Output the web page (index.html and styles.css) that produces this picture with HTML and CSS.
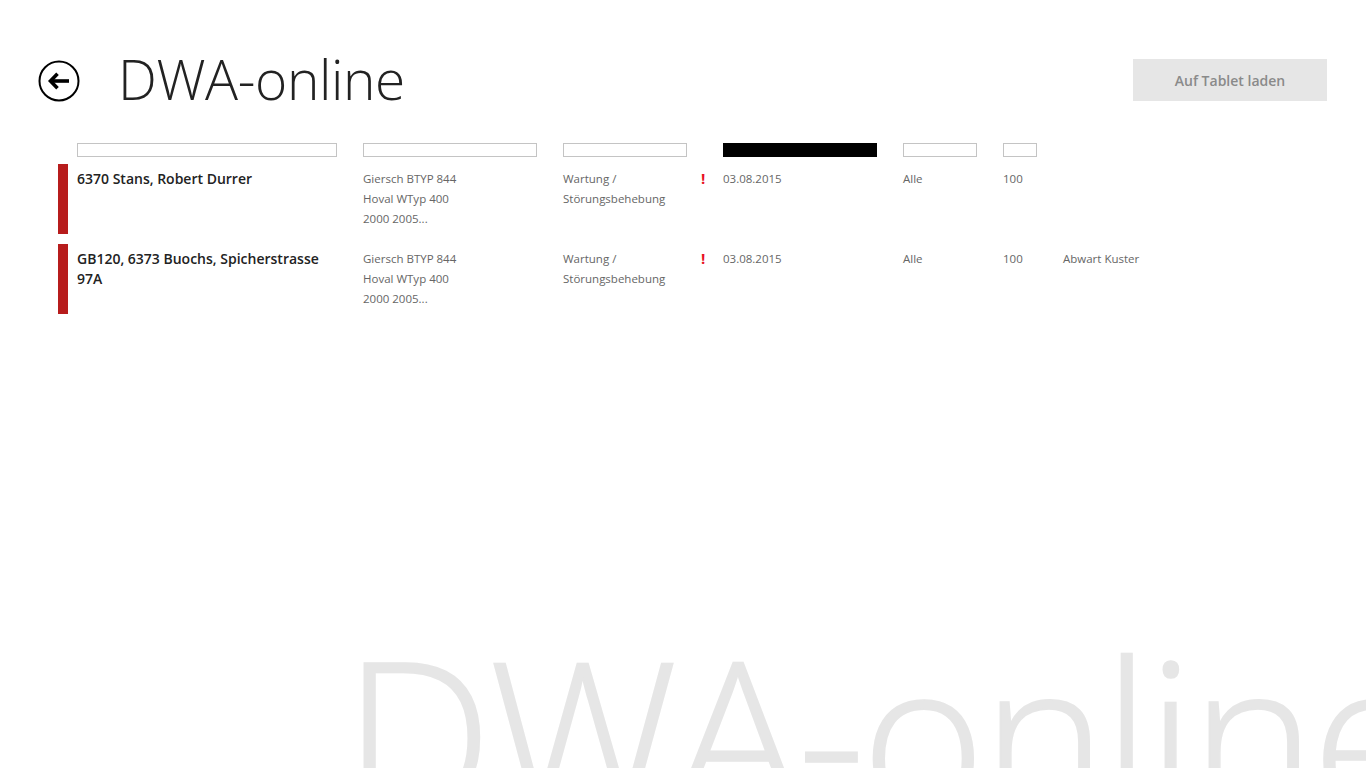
FILE: index.html
```html
<html>
<head>
  <meta charset="utf-8">
  <link rel="stylesheet" href="styles.css">
</head>
<body>
  <div class="page">
    <div class="watermark">DWA-online</div>

    <div class="page-header">
      <div class="page-header_left">
        <button class="back-button" type="button">
          <svg width="42" height="42" viewBox="0 0 42 42">
            <circle cx="21" cy="21" r="19.5" fill="none" stroke="#000" stroke-width="2"/>
            <path d="M12.5 21 H31" fill="none" stroke="#000" stroke-width="3.6"/>
            <path d="M19.5 13.8 L12.5 21 L19.5 28.2" fill="none" stroke="#000" stroke-width="3.6" stroke-linejoin="miter"/>
          </svg>
        </button>
        <h1 class="page-header_title">DWA-online</h1>
      </div>
      <button class="load-button" type="button">Auf Tablet laden</button>
    </div>

    <div class="list">
      <div class="list_filters">
        <span class="filter filter-name"></span>
        <span class="filter filter-device"></span>
        <span class="filter filter-type"></span>
        <span></span>
        <span class="filter filter-date is-active"></span>
        <span class="filter filter-group"></span>
        <span class="filter filter-count"></span>
        <span></span>
      </div>

      <div class="list_row">
        <div class="list_row_marker"></div>
        <div class="list_row_cells">
          <div class="cell-name">6370 Stans, Robert Durrer</div>
          <div class="cell-small">Giersch BTYP 844<br>Hoval WTyp 400<br>2000 2005...</div>
          <div class="cell-small">Wartung /<br>Störungsbehebung</div>
          <div class="cell-flag">!</div>
          <div class="cell-small">03.08.2015</div>
          <div class="cell-small">Alle</div>
          <div class="cell-small">100</div>
          <div class="cell-small"></div>
        </div>
      </div>

      <div class="list_row">
        <div class="list_row_marker"></div>
        <div class="list_row_cells">
          <div class="cell-name">GB120, 6373 Buochs, Spicherstrasse 97A</div>
          <div class="cell-small">Giersch BTYP 844<br>Hoval WTyp 400<br>2000 2005...</div>
          <div class="cell-small">Wartung /<br>Störungsbehebung</div>
          <div class="cell-flag">!</div>
          <div class="cell-small">03.08.2015</div>
          <div class="cell-small">Alle</div>
          <div class="cell-small">100</div>
          <div class="cell-small">Abwart Kuster</div>
        </div>
      </div>
    </div>
  </div>
</body>
</html>
```

FILE: styles.css
```css
html, body {
  margin: 0;
  padding: 0;
  height: 100%;
  overflow: hidden;
  background: #fff;
}
body {
  font-family: "Segoe UI", "Open Sans", "Noto Sans", sans-serif;
  color: #222;
}
.page {
  position: relative;
  height: 100%;
  overflow: hidden;
  isolation: isolate;
}
.page-header {
  display: flex;
  justify-content: space-between;
  align-items: flex-start;
  padding: 59px 39px 0 38px;
}
.page-header_left {
  display: flex;
  align-items: center;
}
.back-button {
  width: 42px;
  height: 42px;
  padding: 0;
  border: none;
  background: none;
  margin-top: 1px;
}
.back-button svg {
  display: block;
}
.page-header_title {
  margin: -4px 0 0 38px;
  font-size: 55px;
  font-weight: 300;
  line-height: 42px;
  letter-spacing: -0.4px;
  color: #222;
}
.load-button {
  width: 194px;
  height: 42px;
  border: none;
  background: #e6e6e6;
  color: #8a8a8a;
  font-family: "Segoe UI", "Open Sans", sans-serif;
  font-size: 14px;
  font-weight: 600;
}
.list {
  padding: 41px 0 0 58px;
}
.list_filters,
.list_row_cells {
  display: grid;
  grid-template-columns: 286px 200px 136px 24px 180px 100px 60px auto;
}
.list_filters {
  padding-left: 19px;
  height: 14px;
  margin-bottom: 7px;
}
.filter {
  display: block;
  box-sizing: border-box;
  height: 14px;
  border: 1px solid #c4c4c4;
  background: #fff;
}
.filter-name { width: 260px; }
.filter-device { width: 174px; }
.filter-type { width: 124px; }
.filter-date { width: 154px; }
.filter-group { width: 74px; }
.filter-count { width: 34px; }
.filter.is-active {
  background: #000;
  border-color: #000;
}
.list_row {
  display: flex;
  height: 70px;
  margin-bottom: 10px;
}
.list_row_marker {
  width: 10px;
  background: #b71c1c;
}
.list_row_cells {
  padding: 5px 0 0 9px;
}
.cell-name {
  font-size: 14px;
  font-weight: 600;
  line-height: 20px;
  color: #222;
  padding-right: 16px;
}
.cell-small {
  font-size: 11.5px;
  line-height: 20px;
  color: #666;
}
.cell-flag {
  color: #e81123;
  font-weight: 700;
  font-size: 15px;
  line-height: 18px;
  padding-left: 2px;
}
.watermark {
  position: absolute;
  left: 343px;
  top: 627px;
  font-size: 212px;
  font-weight: 300;
  line-height: 1;
  color: #e6e6e6;
  white-space: nowrap;
  letter-spacing: -4px;
  -webkit-text-stroke: 1.5px #e6e6e6;
  z-index: -1;
}
```
